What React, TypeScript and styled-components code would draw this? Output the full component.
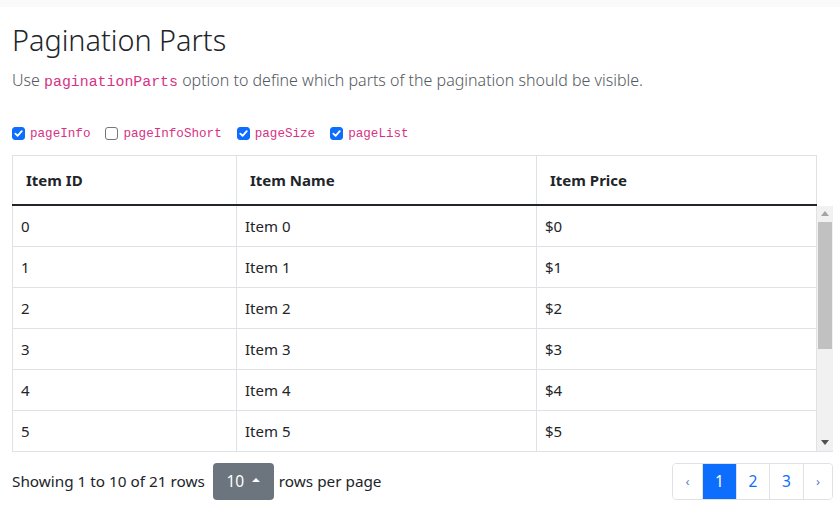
import React from "react";
import styled, { createGlobalStyle } from "styled-components";

const GlobalStyle = createGlobalStyle`
    body {
        margin: 0;
        background: #fff;
        color: #212529;
        font-family: "Noto Sans", "Open Sans", sans-serif;
    }
`

const TopBand = styled.div`
    height: 7px;
    background: #fafafa;
`

const Page = styled.div`
    padding: 0 7px 0 12px;
`

const Title = styled.h1`
    margin: 16px 0 0 0;
    font-size: 28.8px;
    font-weight: 300;
    line-height: 1.2;
`

const Lead = styled.p`
    margin: 10px 0 0 0;
    font-size: 16px;
    font-weight: 300;
    color: #54595e;
    line-height: 1.5;
`

const Code = styled.code`
    font-family: "Liberation Mono", "DejaVu Sans Mono", monospace;
    font-size: 0.93em;
    color: #d63384;
`

const Options = styled.div`
    display: flex;
    gap: 15px;
    margin-top: 34px;
`

const Option = styled.label`
    display: flex;
    align-items: center;
    gap: 5px;
    font-family: "Liberation Mono", "DejaVu Sans Mono", monospace;
    font-size: 12.6px;
    color: #d63384;
`

const Box = styled.span<{ $checked: boolean }>`
    width: 13px;
    height: 13px;
    box-sizing: border-box;
    border-radius: 3px;
    border: 1px solid ${p => (p.$checked ? "#0d6efd" : "#767676")};
    background: ${p => (p.$checked ? "#0d6efd" : "#fff")};
    display: flex;
    align-items: center;
    justify-content: center;
`

const Table = styled.div`
    margin-top: 14px;
    width: 821px;
`

const HeadRow = styled.div`
    display: grid;
    grid-template-columns: 224px 300px 281px;
    width: 805px;
    border-top: 1px solid #dee2e6;
    border-bottom: 2px solid #212529;
    box-sizing: border-box;
`

const HeadCell = styled.div`
    height: 48px;
    display: flex;
    align-items: center;
    padding-left: 13px;
    border-left: 1px solid #dee2e6;
    font-weight: 700;
    font-size: 15px;
    &:last-child {
        border-right: 1px solid #dee2e6;
    }
`

const BodyArea = styled.div`
    display: flex;
    border-bottom: 1px solid #dee2e6;
`

const Rows = styled.div`
    width: 805px;
    height: 245px;
    overflow: hidden;
`

const Row = styled.div`
    display: grid;
    grid-template-columns: 224px 300px 281px;
    border-bottom: 1px solid #dee2e6;
    &:last-child {
        border-bottom: none;
    }
`

const Cell = styled.div`
    height: 40px;
    display: flex;
    align-items: center;
    padding-left: 8px;
    border-left: 1px solid #dee2e6;
    font-size: 15px;
    &:last-child {
        border-right: 1px solid #dee2e6;
    }
`

const Scrollbar = styled.div`
    width: 16px;
    background: #f1f1f1;
    display: flex;
    flex-direction: column;
`

const ScrollBtn = styled.div`
    height: 16px;
    display: flex;
    align-items: center;
    justify-content: center;
`

const Thumb = styled.div`
    height: 127px;
    margin: 0 1px;
    background: #c1c1c1;
`

const Track = styled.div`
    flex: 1;
`

const Footer = styled.div`
    display: flex;
    justify-content: space-between;
    align-items: center;
    margin-top: 11px;
    width: 821px;
`

const Info = styled.div`
    display: flex;
    align-items: center;
    font-size: 15.3px;
`

const InfoText = styled.span`
    white-space: nowrap;
`

const SizeButton = styled.div`
    margin: 0 5px 0 8px;
    width: 61px;
    height: 37px;
    border-radius: 4px;
    background: #6c757d;
    color: #fff;
    display: flex;
    align-items: center;
    justify-content: center;
    gap: 8px;
    font-size: 15.5px;
`

const Caret = styled.span`
    width: 0;
    height: 0;
    border-left: 4px solid transparent;
    border-right: 4px solid transparent;
    border-bottom: 4px solid #fff;
    margin-bottom: 2px;
`

const Pager = styled.ul`
    display: flex;
    list-style: none;
    margin: 0;
    padding: 0;
    border: 1px solid #dee2e6;
    border-radius: 4px;
    overflow: hidden;
`

const PageItem = styled.li<{ $active?: boolean; $w: number }>`
    box-sizing: border-box;
    width: ${p => p.$w}px;
    height: 35px;
    display: flex;
    align-items: center;
    justify-content: center;
    font-size: 15.5px;
    color: ${p => (p.$active ? "#fff" : "#0d6efd")};
    background: ${p => (p.$active ? "#0d6efd" : "#fff")};
    & + & {
        border-left: 1px solid ${p => (p.$active ? "#0d6efd" : "#dee2e6")};
    }
`

const Chevron = styled.span`
    font-size: 13px;
    color: #5a7fc0;
`

const options = [
    { name: "pageInfo", checked: true },
    { name: "pageInfoShort", checked: false },
    { name: "pageSize", checked: true },
    { name: "pageList", checked: true },
]

const rows = [0, 1, 2, 3, 4, 5]

export default function App() {
    return (
        <>
            <GlobalStyle />
            <TopBand />
            <Page>
                <Title>Pagination Parts</Title>
                <Lead>
                    Use <Code>paginationParts</Code> option to define which parts of the pagination should be visible.
                </Lead>
                <Options>
                    {options.map(o => (
                        <Option key={o.name}>
                            <Box $checked={o.checked}>
                                {o.checked && (
                                    <svg width="9" height="9" viewBox="0 0 10 10">
                                        <path d="M1.5 5.2 L4 7.6 L8.6 2.4" fill="none" stroke="#fff" strokeWidth="2" strokeLinecap="round" strokeLinejoin="round" />
                                    </svg>
                                )}
                            </Box>
                            {o.name}
                        </Option>
                    ))}
                </Options>
                <Table>
                    <HeadRow>
                        <HeadCell>Item ID</HeadCell>
                        <HeadCell>Item Name</HeadCell>
                        <HeadCell>Item Price</HeadCell>
                    </HeadRow>
                    <BodyArea>
                        <Rows>
                            {rows.map(i => (
                                <Row key={i}>
                                    <Cell>{i}</Cell>
                                    <Cell>Item {i}</Cell>
                                    <Cell>${i}</Cell>
                                </Row>
                            ))}
                        </Rows>
                        <Scrollbar>
                            <ScrollBtn>
                                <svg width="8" height="5" viewBox="0 0 8 5"><path d="M0 5 L4 0 L8 5 Z" fill="#a3a3a3" /></svg>
                            </ScrollBtn>
                            <Thumb />
                            <Track />
                            <ScrollBtn>
                                <svg width="8" height="5" viewBox="0 0 8 5"><path d="M0 0 L4 5 L8 0 Z" fill="#505050" /></svg>
                            </ScrollBtn>
                        </Scrollbar>
                    </BodyArea>
                    <Footer>
                        <Info>
                            <InfoText>Showing 1 to 10 of 21 rows</InfoText>
                            <SizeButton>10 <Caret /></SizeButton>
                            <InfoText>rows per page</InfoText>
                        </Info>
                        <Pager>
                            <PageItem $w={29}><Chevron>‹</Chevron></PageItem>
                            <PageItem $w={34} $active>1</PageItem>
                            <PageItem $w={33}>2</PageItem>
                            <PageItem $w={34}>3</PageItem>
                            <PageItem $w={29}><Chevron>›</Chevron></PageItem>
                        </Pager>
                    </Footer>
                </Table>
            </Page>
        </>
    )
}
